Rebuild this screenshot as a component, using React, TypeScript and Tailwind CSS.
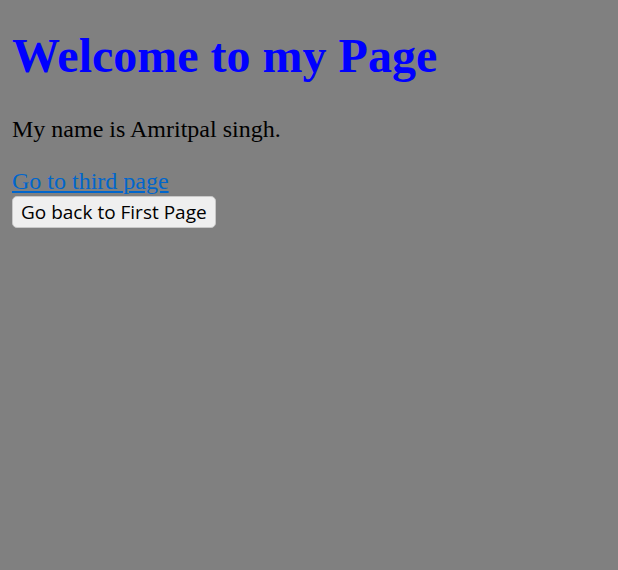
export default function App() {
	return (
		<div className="min-h-[570px] bg-[#808080] p-3 font-['Liberation_Serif',serif] text-black">
			<h1 className="mt-4 mb-8 text-[48px] leading-[55px] font-bold text-[#0000ff]">
				Welcome to my Page
			</h1>
			<p className="mb-6 text-[24px] leading-[28px]">My name is Amritpal singh.</p>
			<a href="#" className="text-[24px] leading-[28px] text-[#0066cc] underline">
				Go to third page
			</a>
			<br />
			<button
				type="button"
				className="rounded-[5px] border border-[#c8c8c8] bg-[#efefef] px-2 py-[3px] font-['Open_Sans',sans-serif] text-[19px] leading-[24px]"
			>
				Go back to First Page
			</button>
		</div>
	);
}
